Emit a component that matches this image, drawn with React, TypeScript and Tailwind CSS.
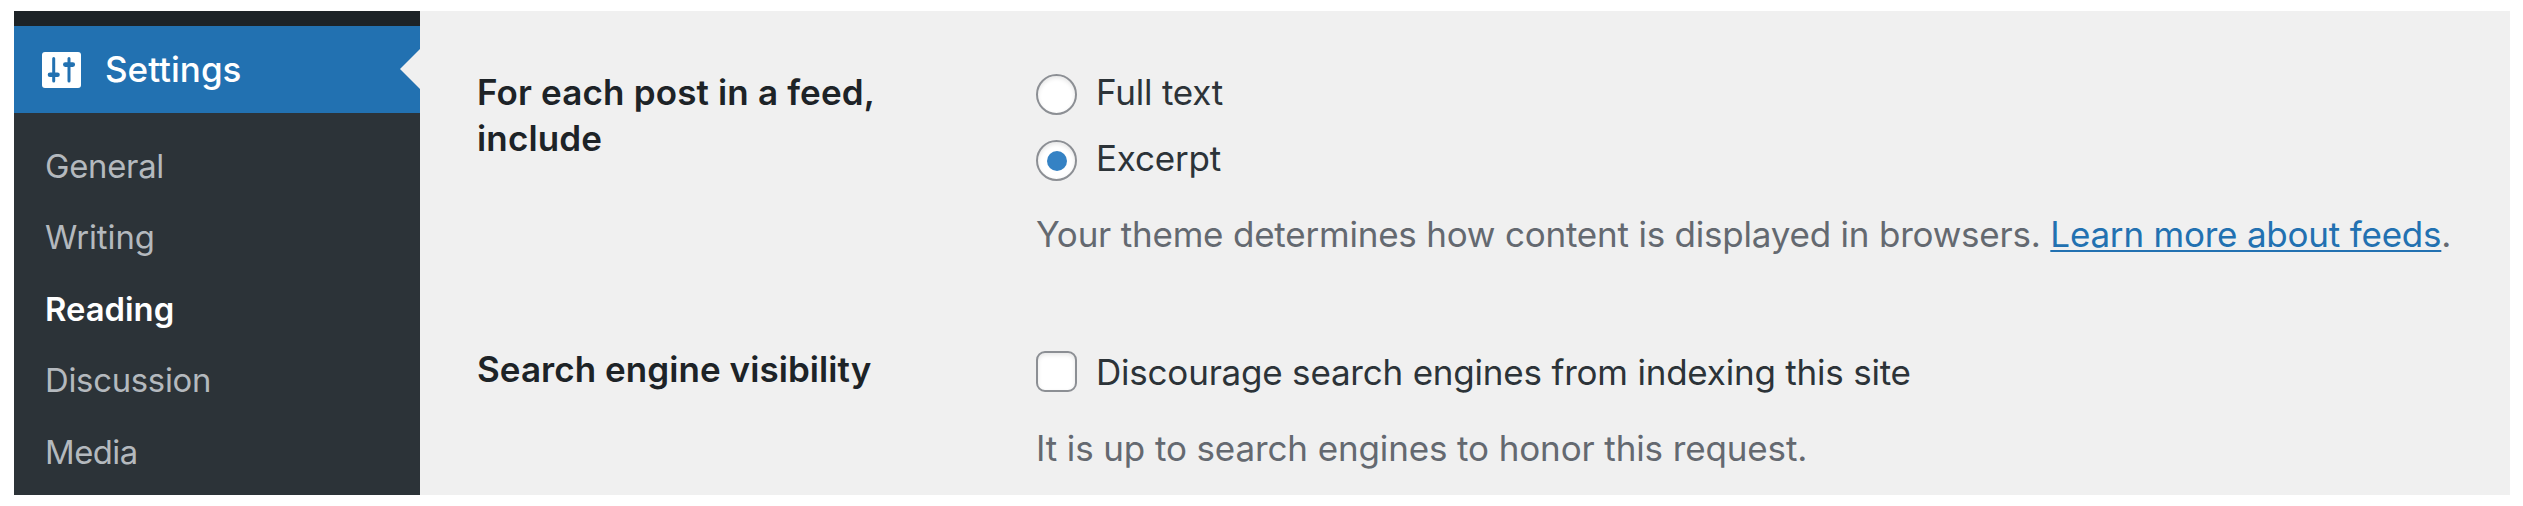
import React from "react";

const menuItems = [
  { name: "General", style: "tracking-[-0.25px]" },
  { name: "Writing", style: "tracking-[-0.05px]" },
  { name: "Reading", style: "font-semibold text-white" },
  { name: "Discussion", style: "tracking-[-0.25px]" },
  { name: "Media", style: "tracking-[-0.5px]" },
];

const SettingsIcon = () => (
  <svg width="39" height="36" viewBox="0 0 39 36" fill="none">
    <rect width="39" height="36" rx="3" fill="#fff" />
    <g stroke="#2271b1" strokeLinecap="round">
      <path d="M11.7 6.5v22.5M27 6.5v22.5" strokeWidth="3" />
      <path d="M8 22.8h7.5M23.3 12.6h7.5" strokeWidth="4.6" />
    </g>
  </svg>
);

const Sidebar = () => {
  return (
    <aside className="w-[406px] shrink-0 bg-[#2c3338] pt-[15px] shadow-[inset_0_15px_0_#1d2327]">
      <div className="relative flex h-[87px] items-center bg-[#2271b1] pl-7">
        <SettingsIcon />
        <span className="ml-6 text-[35px] leading-none font-medium text-white">Settings</span>
        {/* notch that points at the open menu */}
        <span className="absolute top-[23px] right-0 h-[40px] w-[20px] bg-[#f0f0f0] [clip-path:polygon(100%_0,0_50%,100%_100%)]" />
      </div>
      <ul className="pt-[18px] pl-[31px]">
        {menuItems.map((item) => (
          <li key={item.name} className="h-[71.4px] text-[32.8px] leading-[71.4px] text-[#b4b9be]">
            <span className={item.style}>{item.name}</span>
          </li>
        ))}
      </ul>
    </aside>
  );
};

const Radio = ({ label, checked }: { label: string; checked?: boolean }) => (
  <label className="flex h-[66px] items-start">
    <span className="mt-[5px] flex h-[41px] w-[41px] items-center justify-center rounded-full border-2 border-[#8c8f94] bg-white shadow-[inset_0_2px_4px_rgba(0,0,0,0.1)]">
      {checked && <span className="h-5 w-5 rounded-full bg-[#3582c4]" />}
    </span>
    <span className="ml-[19px]">{label}</span>
  </label>
);

const App = () => {
  return (
    <div className="h-[506px] w-[2523px] bg-white pt-[11px] pl-[14px] font-[Inter,sans-serif]">
      <div className="flex h-[484px] w-[2496px] overflow-hidden bg-[#f0f0f0]">
        <Sidebar />
        <main className="flex-1 pt-[58px] pl-[57px] text-[35px] leading-[46px] tracking-[-0.21px] whitespace-nowrap text-[#2c3338]">
          <section className="flex h-[277px]">
            <h2 className="w-[559px] pr-[140px] font-semibold tracking-[0.16px] whitespace-normal text-[#1d2327]">
              For each post in a feed, include
            </h2>
            <div>
              <Radio label="Full text" />
              <Radio label="Excerpt" checked />
              <p className="mt-[10px] text-[#646970]">
                Your theme determines how content is displayed in browsers.{" "}
                <a className="text-[#2271b1] underline decoration-2 underline-offset-[3px]">Learn more about feeds</a>.
              </p>
            </div>
          </section>
          <section className="flex">
            <h2 className="w-[559px] font-semibold tracking-[0.06px] text-[#1d2327]">Search engine visibility</h2>
            <div className="pt-[2.5px]">
              <label className="flex items-center">
                <span className="h-[41px] w-[41px] rounded-[9px] border-2 border-[#8c8f94] bg-white shadow-[inset_0_2px_4px_rgba(0,0,0,0.1)]" />
                <span className="ml-[19px]">Discourage search engines from indexing this site</span>
              </label>
              <p className="mt-[30px] tracking-[-0.12px] text-[#646970]">It is up to search engines to honor this request.</p>
            </div>
          </section>
        </main>
      </div>
    </div>
  );
};

export default App;
